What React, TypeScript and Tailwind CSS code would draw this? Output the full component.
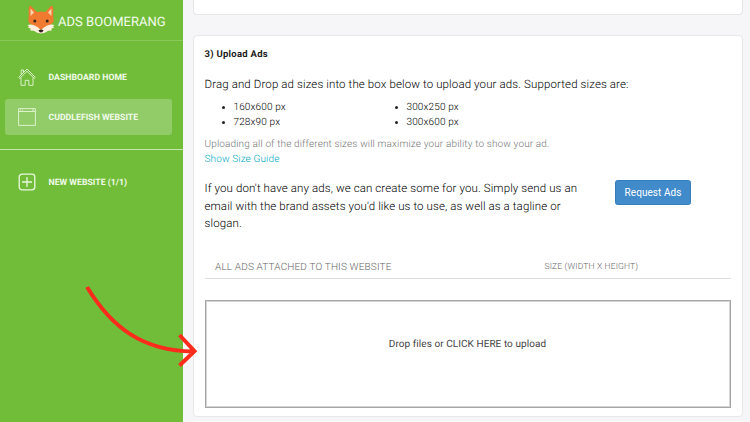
import React from "react";

function Fox() {
  return (
    <svg width="28" height="29" viewBox="0 0 28 29" className="shrink-0">
      <path d="M2.200 1.200Q3.200.2 4.800 1.800L9.800 7q4.200-1.200 8.400 0l5-5.200Q24.800.2 25.800 1.200q1 3 .4 7.500l.4 8.300L14 27.500 1.400 17l.4-8.300Q1.200 4.200 2.200 1.200Z" fill="#ef7a30" />
      <path d="M3.500 3.600 7 7.500 3.600 11ZM24.500 3.600 21 7.500l3.400 3.500Z" fill="#fbd5ae" />
      <path d="M.5 20Q5 18.500 8.800 21q2.700 1.300 5.200 4 2.500-2.700 5.200-4 3.800-2.500 8.300-1l-1.500 1.500 1 1.200-2.600.9.300 1.800-3.500.4Q18 28.400 14 28.400T6.800 25.800l-3.500-.4.300-1.800L1 22.700l1-1.200Z" fill="#fdeedd" />
      <circle cx="7.800" cy="16" r="1.500" fill="#38251d" />
      <circle cx="20.200" cy="16" r="1.500" fill="#38251d" />
      <path d="M11.500 25.200q2.500-1.500 5 0-.8 2.300-2.500 2.300t-2.500-2.300Z" fill="#30231e" />
    </svg>
  );
}

function HomeIcon() {
  return (
    <svg width="18" height="18" viewBox="0 0 18 18" fill="none" stroke="#e4f5d8" strokeWidth=".9" strokeLinejoin="round" className="shrink-0">
      <path d="M.7 9.300 9 1l8.300 8.300-1.100 1.100L9 3.300l-7.200 7.100Z" />
      <path d="M3 9.600v7.700h4.200v-5h3.600v5H15V9.600M3.200 6.600V2h2.300v2.300" />
    </svg>
  );
}

function WindowIcon() {
  return (
    <svg width="18" height="18" viewBox="0 0 18 18" fill="none" stroke="#e4f5d8" strokeWidth=".9" className="shrink-0">
      <path d="M.6.600h16.800v16.800H.6ZM.6 3.500h16.800M2 2h1M4 2h1M14 2h2" />
    </svg>
  );
}

function PlusIcon() {
  return (
    <svg width="18" height="18" viewBox="0 0 18 18" fill="none" stroke="#eaf8df" strokeWidth="1.300" className="shrink-0">
      <rect x="1.200" y="1.200" width="15.600" height="15.600" rx="2.800" />
      <path d="M9 4v10M4 9h10" />
    </svg>
  );
}

function NavItem({ icon, label, active }: { icon: React.ReactNode; label: string; active?: boolean }) {
  return (
    <div className={active ? "mx-[5px] mr-[11px] flex h-9 items-center rounded-[3px] bg-[#91cc68] pl-[13px]" : "mx-[5px] mr-[11px] flex h-9 items-center pl-[13px]"}>
      {icon}
      <span className="ml-[12.500px] pt-[2px] text-[8.700px] font-bold leading-none tracking-[.02px] text-[#f0fae8]">{label}</span>
    </div>
  );
}

function Sidebar() {
  return (
    <aside className="h-full w-[182.500px] shrink-0 bg-[#71bd39]">
      <div className="flex h-[41px] items-start border-b border-[#88c959] pl-[27px] pt-[5px]">
        <Fox />
        <span className="ml-[3px] mt-[9px] whitespace-nowrap pt-px text-[13px] leading-4 tracking-[.03px] text-[#f3fbed]">ADS BOOMERANG</span>
      </div>
      <div className="pt-[18px]">
        <NavItem icon={<HomeIcon />} label="DASHBOARD HOME" />
        <div className="h-1" />
        <NavItem icon={<WindowIcon />} label="CUDDLEFISH WEBSITE" active />
      </div>
      <div className="mt-[14px] border-t-[1.500px] border-[#c5e5af] pt-[14px]">
        <NavItem icon={<PlusIcon />} label="NEW WEBSITE (1/1)" />
      </div>
    </aside>
  );
}

function Sizes({ items }: { items: string[] }) {
  return (
    <ul className="w-[173px] pl-[17px]">
      {items.map((size) => (
        <li key={size} className="flex h-[15px] items-center text-[10px] leading-[15px] tracking-[.14px]">
          <span className="mr-[9px] size-[3px] rounded-full bg-[#222]" />
          {size}
        </li>
      ))}
    </ul>
  );
}

export default function App() {
  return (
    <div className="relative flex h-[422px] w-[750px] overflow-hidden bg-[#f6f6f9] font-['Roboto',sans-serif] text-[#333] [text-rendering:geometricPrecision]">
      <Sidebar />
      <main className="ml-[10.500px] w-[549.500px]">
        <div className="h-[15px] rounded-b-[4px] border border-t-0 border-[#e6e6e9] bg-white" />
        <section className="mt-5 h-[382px] rounded-[4px] border border-[#e8e8eb] bg-white pl-[10.500px] pr-[11px] pt-[13px]">
          <h2 className="text-[9.500px] font-bold leading-3 tracking-[.26px] text-[#222]">3) Upload Ads</h2>
          <p className="mt-[14px] whitespace-nowrap text-[11.500px] font-light leading-[18px] tracking-[.12px] text-black">Drag and Drop ad sizes into the box below to upload your ads. Supported sizes are:</p>
          <div className="mt-[7px] flex font-light text-black">
            <Sizes items={["160x600 px", "728x90 px"]} />
            <Sizes items={["300x250 px", "300x600 px"]} />
          </div>
          <p className="mt-[7px] whitespace-nowrap text-[10px] font-light leading-[15px] tracking-[.14px] text-[#777]">Uploading all of the different sizes will maximize your ability to show your ad.</p>
          <a className="block text-[10px] font-light leading-[15px] tracking-[.14px] text-[#00a9c6]">Show Size Guide</a>
          <div className="mt-[13px] flex items-start">
            <p className="w-[410.500px] whitespace-nowrap text-[11.500px] font-light leading-[17.500px] tracking-[.11px] text-black">
              If you don't have any ads, we can create some for you. Simply send us an<br />
              email with the brand assets you'd like us to use, as well as a tagline or<br />
              slogan.
            </p>
            <button className="h-[25px] w-[76px] rounded-[2.500px] border border-[#357ebd] bg-[#428bca] pt-px text-[10px] leading-[22px] tracking-[.05px] text-white">Request Ads</button>
          </div>
          <div className="mt-[21px] flex h-[25px] items-center border-b border-[#dedede] pt-[3px] text-[#999]">
            <span className="w-[340px] pl-[10.500px] pt-px text-[10px] font-light leading-none tracking-[.15px] text-[#666]">ALL ADS ATTACHED TO THIS WEBSITE</span>
            <span className="text-[8.500px] font-light leading-none tracking-[.15px] text-[#666]">SIZE (WIDTH X HEIGHT)</span>
          </div>
          <div className="mt-[21px] flex h-[108px] items-center justify-center border border-[#a6a6a6] pb-[19px] text-[10px] tracking-[.06px] text-[#444] shadow-[inset_0_0_0_1px_#d4d4d4]">Drop files or CLICK HERE to upload</div>
        </section>
        <div className="mt-1 h-2 rounded-t-[4px] bg-[#fafafb]" />
      </main>
      <svg width="130" height="90" viewBox="0 0 130 90" fill="none" stroke="#fb2c1c" strokeWidth="4" className="absolute left-[75px] top-[280px]">
        <path d="M12 7C37 48 68 71 118 71.500M104.500 55l15 16.200-15 14.300" />
      </svg>
    </div>
  );
}
